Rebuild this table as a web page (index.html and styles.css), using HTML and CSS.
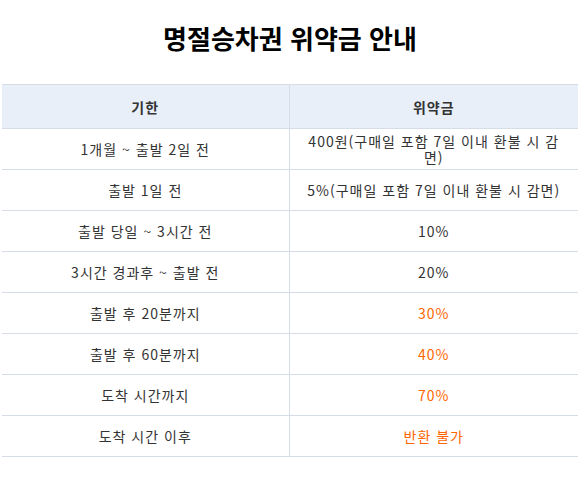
FILE: index.html
```html
<!DOCTYPE html>
<html lang="ko">
<head>
<meta charset="utf-8">
<title>명절승차권 위약금 안내</title>
<link rel="stylesheet" href="styles.css">
</head>
<body>
<div class="page">
  <h1 class="title">명절승차권 위약금 안내</h1>
  <table class="fee-table">
    <colgroup><col class="col-left"><col class="col-right"></colgroup>
    <thead>
      <tr><th>기한</th><th>위약금</th></tr>
    </thead>
    <tbody>
      <tr><td>1개월 ~ 출발 2일 전</td><td>400원(구매일 포함 7일 이내 환불 시 감면)</td></tr>
      <tr><td>출발 1일 전</td><td>5%(구매일 포함 7일 이내 환불 시 감면)</td></tr>
      <tr><td>출발 당일 ~ 3시간 전</td><td>10%</td></tr>
      <tr><td>3시간 경과후 ~ 출발 전</td><td>20%</td></tr>
      <tr><td>출발 후 20분까지</td><td class="warn">30%</td></tr>
      <tr><td>출발 후 60분까지</td><td class="warn">40%</td></tr>
      <tr><td>도착 시간까지</td><td class="warn">70%</td></tr>
      <tr><td>도착 시간 이후</td><td class="warn">반환 불가</td></tr>
    </tbody>
  </table>
</div>
</body>
</html>
```
FILE: styles.css
```css
html, body {
  margin: 0;
  padding: 0;
  background: #fff;
}
body {
  font-family: "Noto Sans CJK KR", "Noto Sans", sans-serif;
  color: #333;
}
.page {
  padding: 0 2px;
}
.title {
  margin: 0 0 29px;
  padding-top: 21px;
  height: 34px;
  line-height: 34px;
  font-size: 26px;
  font-weight: 700;
  color: #000;
  text-align: center;
}
.fee-table {
  width: 100%;
  border-collapse: collapse;
  table-layout: fixed;
}
.col-left { width: 287px; }
.fee-table th,
.fee-table td {
  text-align: center;
  vertical-align: middle;
  padding: 0 10px;
  font-size: 14px;
  line-height: 16px;
  letter-spacing: 1px;
  border-bottom: 1px solid #d6dde7;
}
.fee-table th + th,
.fee-table td + td {
  border-left: 1px solid #d6dde7;
}
.fee-table th {
  height: 43px;
  background: #e8eff8;
  border-top: 1px solid #d6dde7;
  font-weight: 700;
  color: #333;
}
.fee-table td {
  height: 40px;
  font-weight: 400;
}
.fee-table .warn {
  color: #ff6600;
}
```
